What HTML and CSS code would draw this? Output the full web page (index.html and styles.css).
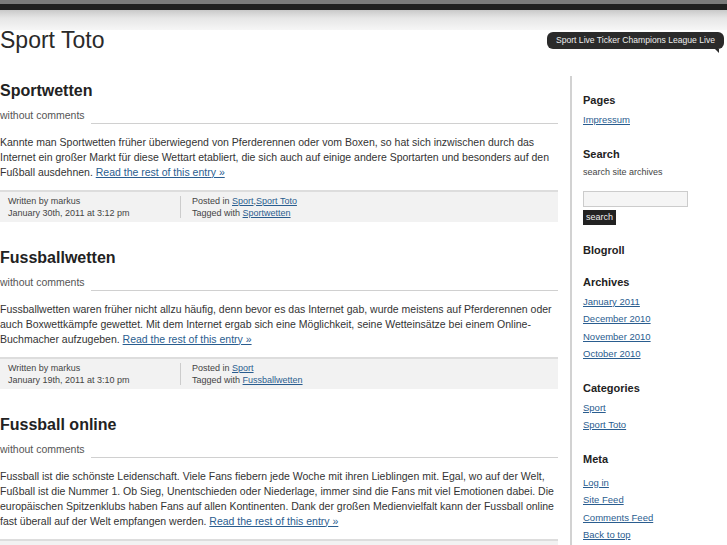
FILE: index.html
```html
<!DOCTYPE html>
<html lang="de">

<head>
  <meta charset="UTF-8" />
  <meta name="viewport" content="width=device-width, initial-scale=1.0" />
  <title>Sport Toto</title>
  <link rel="stylesheet" href="styles.css">
</head>

<body>
  <div class="topbar"></div>
  <div class="header">
    <h1 class="site-title">Sport Toto</h1>
    <div class="tagline">Sport Live Ticker Champions League Live</div>
  </div>

  <div class="wrap">
    <div class="main">
      <div class="post">
        <h2 class="post-title">Sportwetten</h2>
        <div class="comments"><span>without comments</span><div class="rule"></div></div>
        <p class="entry">Kannte man Sportwetten früher überwiegend von Pferderennen oder vom Boxen, so hat sich inzwischen durch das Internet ein großer Markt für diese Wettart etabliert, die sich auch auf einige andere Sportarten und besonders auf den Fußball ausdehnen. <a href="#">Read the rest of this entry »</a></p>
        <div class="meta">
          <div class="meta-left">Written by markus<br />January 30th, 2011 at 3:12 pm</div>
          <div class="meta-sep"></div>
          <div class="meta-right">Posted in <a href="#">Sport</a>,<a href="#">Sport Toto</a><br />Tagged with <a href="#">Sportwetten</a></div>
        </div>
      </div>

      <div class="post">
        <h2 class="post-title">Fussballwetten</h2>
        <div class="comments"><span>without comments</span><div class="rule"></div></div>
        <p class="entry">Fussballwetten waren früher nicht allzu häufig, denn bevor es das Internet gab, wurde meistens auf Pferderennen oder auch Boxwettkämpfe gewettet. Mit dem Internet ergab sich eine Möglichkeit, seine Wetteinsätze bei einem Online-Buchmacher aufzugeben. <a href="#">Read the rest of this entry »</a></p>
        <div class="meta">
          <div class="meta-left">Written by markus<br />January 19th, 2011 at 3:10 pm</div>
          <div class="meta-sep"></div>
          <div class="meta-right">Posted in <a href="#">Sport</a><br />Tagged with <a href="#">Fussballwetten</a></div>
        </div>
      </div>

      <div class="post">
        <h2 class="post-title">Fussball online</h2>
        <div class="comments"><span>without comments</span><div class="rule"></div></div>
        <p class="entry">Fussball ist die schönste Leidenschaft. Viele Fans fiebern jede Woche mit ihren Lieblingen mit. Egal, wo auf der Welt, Fußball ist die Nummer 1. Ob Sieg, Unentschieden oder Niederlage, immer sind die Fans mit viel Emotionen dabei. Die europäischen Spitzenklubs haben Fans auf allen Kontinenten. Dank der großen Medienvielfalt kann der Fussball online fast überall auf der Welt empfangen werden. <a href="#">Read the rest of this entry »</a></p>
        <div class="meta">
          <div class="meta-left">Written by markus<br />January 10th, 2011 at 2:48 pm</div>
          <div class="meta-sep"></div>
          <div class="meta-right">Posted in <a href="#">Sport</a><br />Tagged with <a href="#">Fussball</a></div>
        </div>
      </div>
    </div>

    <div class="sidebar">
      <div class="widget">
        <h3>Pages</h3>
        <ul>
          <li><a href="#">Impressum</a></li>
        </ul>
      </div>

      <div class="widget">
        <h3>Search</h3>
        <p class="hint">search site archives</p>
        <form class="search">
          <input type="text" class="search-box" />
          <button type="button" class="search-btn">search</button>
        </form>
      </div>

      <div class="widget">
        <h3>Blogroll</h3>
      </div>

      <div class="widget">
        <h3>Archives</h3>
        <ul>
          <li><a href="#">January 2011</a></li>
          <li><a href="#">December 2010</a></li>
          <li><a href="#">November 2010</a></li>
          <li><a href="#">October 2010</a></li>
        </ul>
      </div>

      <div class="widget">
        <h3>Categories</h3>
        <ul>
          <li><a href="#">Sport</a></li>
          <li><a href="#">Sport Toto</a></li>
        </ul>
      </div>

      <div class="widget">
        <h3>Meta</h3>
        <ul class="meta-list">
          <li><a href="#">Log in</a></li>
          <li><a href="#">Site Feed</a></li>
          <li><a href="#">Comments Feed</a></li>
          <li><a href="#">Back to top</a></li>
        </ul>
      </div>
    </div>
  </div>
</body>

</html>
```

FILE: styles.css
```css
* {
  margin: 0;
  padding: 0;
  list-style: none;
  box-sizing: border-box;
}

body {
  font-family: "Liberation Sans", Arial, sans-serif;
  color: #333;
  background: #fff;
}

a {
  color: #2a5d8f;
}

/* top bar */
.topbar {
  height: 10px;
  background: #1f1f1f;
  border-top: 4px solid #7a7a7a;
}

.header {
  display: flex;
  justify-content: space-between;
  align-items: flex-start;
  padding-top: 17px;
  height: 66px;
  background: linear-gradient(#c9c9c9, #e6e6e6 8px, #f6f6f6 20px, #fff 20px);
}

.site-title {
  font-size: 23px;
  line-height: 26px;
  font-weight: normal;
  color: #2a2a2a;
}

.tagline {
  position: relative;
  margin: 5px 3px 0 0;
  height: 17px;
  line-height: 17px;
  padding: 0 9px;
  border-radius: 6px;
  background: #2b2b2b;
  color: #eee;
  font-size: 8.6px;
}

.tagline::after {
  content: "";
  position: absolute;
  right: 5px;
  bottom: -4px;
  border-top: 4px solid #2b2b2b;
  border-left: 4px solid transparent;
}

/* layout */
.wrap {
  display: flex;
  align-items: flex-start;
}

.main {
  width: 558px;
  padding-top: 5px;
}

.sidebar {
  margin-left: 12px;
  padding: 17px 0 0 11px;
  border-left: 2px solid #d2d2d2;
  flex: 1;
  min-height: 480px;
}

/* posts */
.post {
  margin-bottom: 26px;
}

.post-title {
  font-size: 16px;
  line-height: 20px;
  color: #222;
}

.comments {
  display: flex;
  align-items: flex-end;
  margin-top: 7px;
  font-size: 10.5px;
  line-height: 14px;
  color: #555;
}

.rule {
  flex: 1;
  margin: 0 0 -2px 6px;
  border-top: 1px solid #d0d0d0;
}

.entry {
  margin-top: 12.5px;
  font-size: 10.5px;
  line-height: 15px;
  color: #333;
}

.meta {
  display: flex;
  margin-top: 10.5px;
  padding: 3px 0;
  background: #f2f2f2;
  border-top: 2px solid #ddd;
  font-size: 9px;
  line-height: 12px;
  color: #444;
}

.meta-left {
  width: 180px;
  padding-left: 8px;
}

.meta-sep {
  width: 1px;
  height: 22px;
  align-self: center;
  background: #ccc;
}

.meta-right {
  padding-left: 11px;
}

/* sidebar */
.widget {
  margin-bottom: 18px;
}

.widget h3 {
  font-size: 11px;
  line-height: 14px;
  color: #222;
}

.widget ul {
  margin-top: 4px;
}

.widget li {
  font-size: 9.5px;
  line-height: 17.5px;
}

.widget .meta-list {
  margin-top: 8px;
}

.hint {
  margin-top: 5px;
  font-size: 9px;
  line-height: 12px;
  color: #444;
}

.search {
  margin-top: 13px;
}

.search-box {
  display: block;
  width: 105px;
  height: 16px;
  border: 1px solid #ccc;
  background: #f5f5f5;
}

.search-btn {
  display: block;
  margin-top: 3px;
  height: 15px;
  padding: 0 3px;
  border: none;
  background: #222;
  color: #eee;
  font-family: "Liberation Sans", Arial, sans-serif;
  font-size: 9px;
}
```
